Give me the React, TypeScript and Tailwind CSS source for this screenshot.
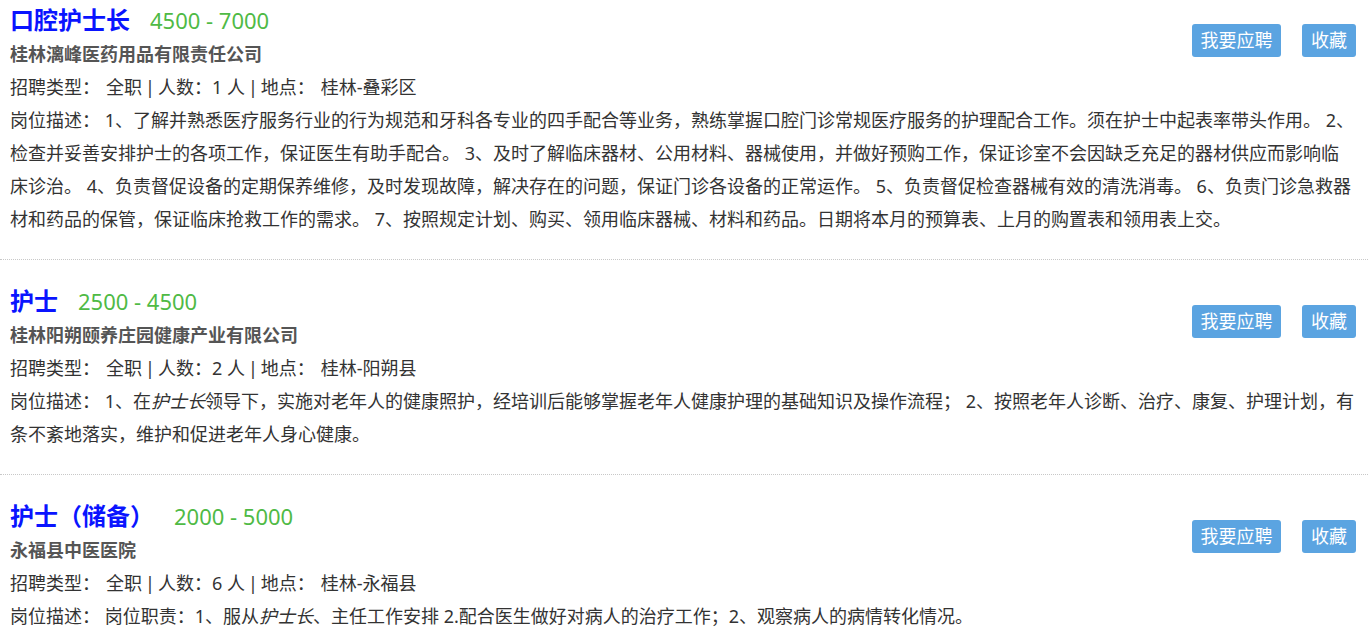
import React from 'react';

type Job = {
  title: string;
  salary: string;
  company: string;
  count: number;
  place: string;
  desc: React.ReactNode;
};

const jobs: Job[] = [
  {
    title: '口腔护士长',
    salary: '4500 - 7000',
    company: '桂林漓峰医药用品有限责任公司',
    count: 1,
    place: '桂林-叠彩区',
    desc: (
      <>
        1、了解并熟悉医疗服务行业的行为规范和牙科各专业的四手配合等业务，熟练掌握口腔门诊常规医疗服务的护理配合工作。须在护士中起表率带头作用。 2、检查并妥善安排护士的各项工作，保证医生有助手配合。 3、及时了解临床器材、公用材料、器械使用，并做好预购工作，保证诊室不会因缺乏充足的器材供应而影响临床诊治。 4、负责督促设备的定期保养维修，及时发现故障，解决存在的问题，保证门诊各设备的正常运作。 5、负责督促检查器械有效的清洗消毒。 6、负责门诊急救器材和药品的保管，保证临床抢救工作的需求。 7、按照规定计划、购买、领用临床器械、材料和药品。日期将本月的预算表、上月的购置表和领用表上交。
      </>
    ),
  },
  {
    title: '护士',
    salary: '2500 - 4500',
    company: '桂林阳朔颐养庄园健康产业有限公司',
    count: 2,
    place: '桂林-阳朔县',
    desc: (
      <>
        1、在<em>护士长</em>领导下，实施对老年人的健康照护，经培训后能够掌握老年人健康护理的基础知识及操作流程； 2、按照老年人诊断、治疗、康复、护理计划，有条不紊地落实，维护和促进老年人身心健康。
      </>
    ),
  },
  {
    title: '护士（储备）',
    salary: '2000 - 5000',
    company: '永福县中医医院',
    count: 6,
    place: '桂林-永福县',
    desc: (
      <>
        岗位职责：1、服从<em>护士长</em>、主任工作安排 2.配合医生做好对病人的治疗工作；2、观察病人的病情转化情况。
      </>
    ),
  },
];

const JobItem: React.FC<{ job: Job }> = ({ job }) => (
  <div className="pl-[10px] pr-[12px] pt-[23px] pb-[23px] border-b border-dotted border-[#c8c8c8]">
    <div className="flex">
      <div className="flex-1">
        {/* Title + salary */}
        <div className="flex items-baseline leading-[36px]">
          <span className="text-[24px] font-bold text-[#0a14ff]">{job.title}</span>
          <span className="ml-[20px] text-[22px] text-[#4fba45]">{job.salary}</span>
        </div>
        <div className="text-[18px] leading-[33px] font-bold text-[#555]">{job.company}</div>
        <div className="text-[18px] leading-[33px] text-[#333]">
          招聘类型：<span className="ml-[6px]">全职</span>
          <span className="mx-[3px]">|</span>人数：{job.count} 人<span className="mx-[3px]">|</span>地点：
          <span className="ml-[6px]">{job.place}</span>
        </div>
      </div>
      <div className="flex gap-[21px] mt-[22px] h-[33px]">
        <button className="h-[33px] px-[8.5px] rounded-[3px] bg-[#5ba4e1] text-white text-[18px] leading-[33px]">
          我要应聘
        </button>
        <button className="h-[33px] px-[9px] rounded-[3px] bg-[#5ba4e1] text-white text-[18px] leading-[33px]">
          收藏
        </button>
      </div>
    </div>
    <div className="pr-[1px] text-[18px] leading-[33px] text-[#333]">
      岗位描述： {job.desc}
    </div>
  </div>
);

export default function App() {
  return (
    <div className="w-[1368px] h-[639px] overflow-hidden bg-white font-['Noto_Sans','Noto_Sans_CJK_SC',sans-serif]">
      <div className="-mt-[21px]">
        {jobs.map((job) => (
          <JobItem key={job.title} job={job} />
        ))}
      </div>
    </div>
  );
}
